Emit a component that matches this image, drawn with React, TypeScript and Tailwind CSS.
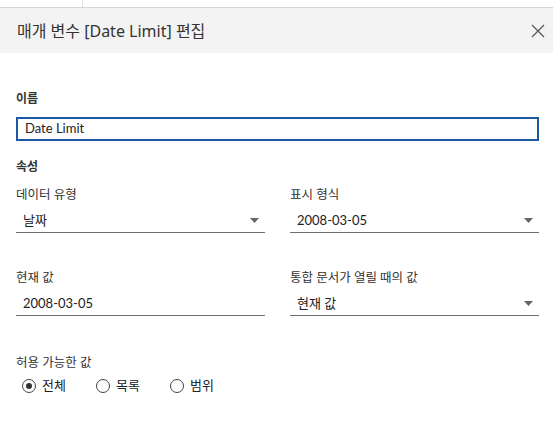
import React from 'react';

const font = { fontFamily: 'Lato, "Noto Sans CJK KR", sans-serif' };

function Caret() {
  return (
    <svg width="9" height="5" viewBox="0 0 9 5" className="fill-[#666]">
      <path d="M0 0H9L4.5 5Z" />
    </svg>
  );
}

function Field({ label, value, select = true }: { label: string; value: string; select?: boolean }) {
  return (
    <div className="flex flex-col">
      <div className="h-[20px] text-[12.5px] leading-[20px] text-[#333]">{label}</div>
      <div className="mt-[4px] flex h-[24px] items-center justify-between border-b border-[#6e6e6e] pl-[7px] pr-[6px]">
        <span className="text-[13px] text-[#222]">{value}</span>
        {select && <Caret />}
      </div>
    </div>
  );
}

function Radio({ label, checked = false }: { label: string; checked?: boolean }) {
  return (
    <label className="flex w-[74px] items-center gap-[6px]">
      <span className="flex h-[14px] w-[14px] items-center justify-center rounded-full border border-[#444] bg-white">
        {checked && <span className="h-[6px] w-[6px] rounded-full bg-[#333]" />}
      </span>
      <span className="text-[13px] text-[#222]">{label}</span>
    </label>
  );
}

export default function App() {
  return (
    <div className="h-[444px] w-[553px] overflow-hidden bg-white" style={font}>
      <div className="flex h-[8px] border-b border-[#d6d6d6]">
        <div className="w-[83px] border-r border-[#e3e3e3]" />
      </div>

      <div className="flex h-[45px] items-center justify-between bg-[#f3f3f3] pl-[17px] pr-[8px]">
        <h1 className="text-[16px] text-[#333]" style={{ fontFamily: '"Noto Sans", "Noto Sans CJK KR", sans-serif' }}>
          매개 변수 [Date Limit] 편집
        </h1>
        <svg width="14" height="14" viewBox="0 0 14 14" className="stroke-[#555]" strokeWidth="1.2">
          <path d="M1 1L13 13M13 1L1 13" />
        </svg>
      </div>

      <div className="pl-[16px] pr-[14px] pt-[36px]">
        <div className="h-[20px] text-[12px] font-semibold leading-[20px] text-[#333]">이름</div>
        <div className="mt-[8px] flex h-[24px] items-center border-2 border-[#1a5aa3] px-[7px] text-[13px] text-[#222]">
          Date Limit
        </div>

        <div className="mt-[16px] h-[20px] text-[12px] font-semibold leading-[20px] text-[#333]">속성</div>

        <div className="mt-[8px] grid grid-cols-2 gap-x-[25px] gap-y-[35px]">
          <Field label="데이터 유형" value="날짜" />
          <Field label="표시 형식" value="2008-03-05" />
          <Field label="현재 값" value="2008-03-05" select={false} />
          <Field label="통합 문서가 열릴 때의 값" value="현재 값" />
        </div>

        <div className="mt-[37px] h-[20px] text-[12.5px] leading-[20px] text-[#333]">허용 가능한 값</div>
        <div className="mt-[3px] flex pl-[6px]">
          <Radio label="전체" checked />
          <Radio label="목록" />
          <Radio label="범위" />
        </div>
      </div>
    </div>
  );
}
